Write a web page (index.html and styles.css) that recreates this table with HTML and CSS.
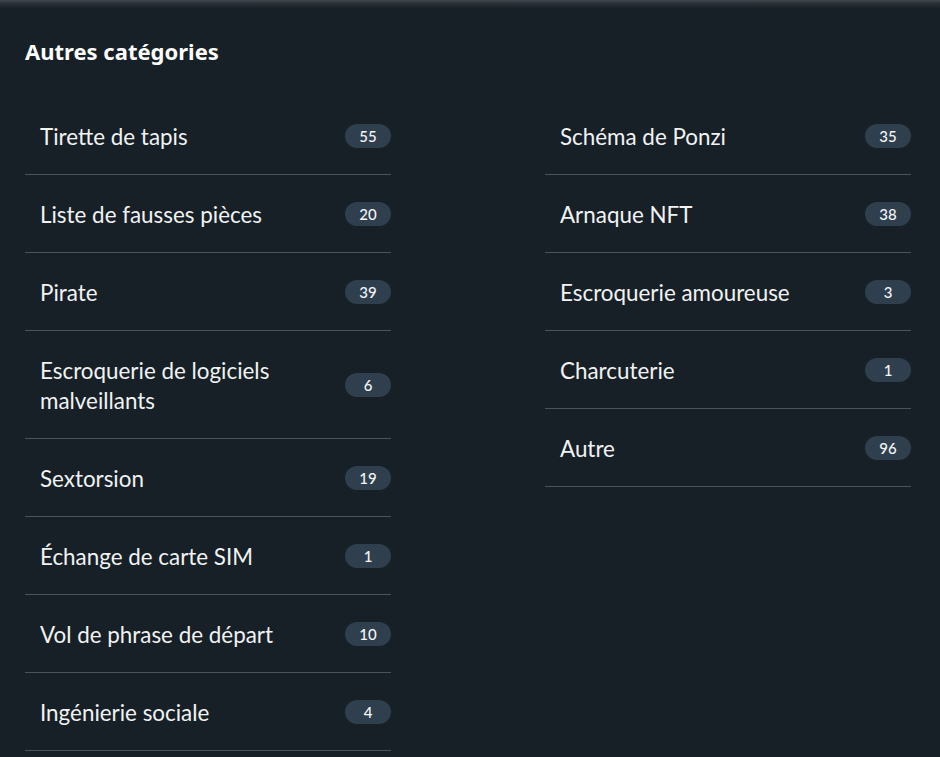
FILE: index.html
```html
<!DOCTYPE html>
<html lang="fr">
<head>
<meta charset="utf-8">
<title>Autres catégories</title>
<link rel="stylesheet" href="styles.css">
</head>
<body>
<div class="topshade"></div>
<section class="panel">
  <h2 class="title">Autres catégories</h2>
  <div class="cols">
    <ul class="list">
      <li class="item"><span class="label">Tirette de tapis</span><span class="badge">55</span></li>
      <li class="item"><span class="label">Liste de fausses pièces</span><span class="badge">20</span></li>
      <li class="item"><span class="label">Pirate</span><span class="badge">39</span></li>
      <li class="item"><span class="label">Escroquerie de logiciels malveillants</span><span class="badge">6</span></li>
      <li class="item"><span class="label">Sextorsion</span><span class="badge">19</span></li>
      <li class="item"><span class="label">Échange de carte SIM</span><span class="badge">1</span></li>
      <li class="item"><span class="label">Vol de phrase de départ</span><span class="badge">10</span></li>
      <li class="item"><span class="label">Ingénierie sociale</span><span class="badge">4</span></li>
    </ul>
    <ul class="list">
      <li class="item"><span class="label">Schéma de Ponzi</span><span class="badge">35</span></li>
      <li class="item"><span class="label">Arnaque NFT</span><span class="badge">38</span></li>
      <li class="item"><span class="label">Escroquerie amoureuse</span><span class="badge">3</span></li>
      <li class="item"><span class="label">Charcuterie</span><span class="badge">1</span></li>
      <li class="item"><span class="label">Autre</span><span class="badge">96</span></li>
    </ul>
  </div>
</section>
</body>
</html>
```
FILE: styles.css
```css
html, body {
  margin: 0;
  padding: 0;
  background: #172026;
  color: #f2f4f5;
  font-family: "Noto Sans", Lato, sans-serif;
  height: 100%;
  overflow: hidden;
}
.topshade {
  position: absolute;
  left: 0;
  right: 0;
  top: 0;
  height: 9px;
  background: linear-gradient(to bottom, #41484f 0%, #2a3238 35%, rgba(23,32,38,0) 100%);
}
.panel {
  padding: 36px 29px 0 25px;
}
.title {
  margin: 0 0 31px 0;
  font-size: 22px;
  line-height: 30px;
  font-weight: 700;
  color: #ffffff;
}
.cols {
  display: grid;
  grid-template-columns: 366px 366px;
  column-gap: 154px;
  align-items: start;
}
.list {
  list-style: none;
  margin: 0;
  padding: 0;
}
.item {
  display: flex;
  align-items: center;
  justify-content: space-between;
  padding: 24px 0 23px 15px;
  border-bottom: 1px solid #4a535a;
}
.label {
  font-family: Lato, "Noto Sans", sans-serif;
  font-size: 22.4px;
  line-height: 30px;
  color: #f0f2f3;
  max-width: 270px;
  position: relative;
  top: 1px;
}
.badge {
  flex: none;
  width: 46px;
  height: 24px;
  border-radius: 12px;
  background: #2f3f4e;
  color: #f3f5f7;
  font-family: Lato, "Noto Sans", sans-serif;
  font-size: 15px;
  line-height: 24px;
  text-align: center;
  font-weight: 500;
}
```
